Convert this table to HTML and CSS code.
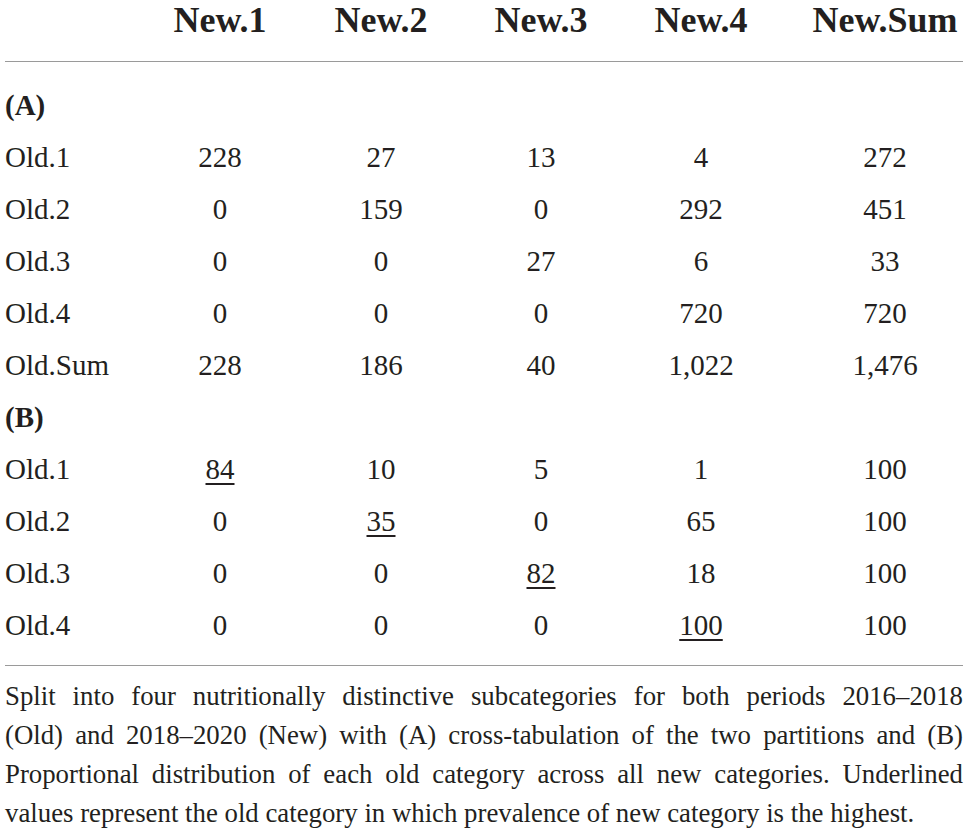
FILE: index.html
```html
<!DOCTYPE html>
<html lang="en">
<head>
<meta charset="utf-8">
<title>Table</title>
<link rel="stylesheet" href="styles.css">
</head>
<body>
<div class="wrap">
  <table class="xtab">
    <colgroup>
      <col class="c-label">
      <col class="c1">
      <col class="c2">
      <col class="c3">
      <col class="c4">
      <col class="c5">
    </colgroup>
    <thead>
      <tr>
        <th></th>
        <th>New.1</th>
        <th>New.2</th>
        <th>New.3</th>
        <th>New.4</th>
        <th class="sum">New.Sum</th>
      </tr>
    </thead>
    <tbody>
      <tr class="first"><td class="sec">(A)</td><td></td><td></td><td></td><td></td><td></td></tr>
      <tr><td>Old.1</td><td>228</td><td>27</td><td>13</td><td>4</td><td class="sum">272</td></tr>
      <tr><td>Old.2</td><td>0</td><td>159</td><td>0</td><td>292</td><td class="sum">451</td></tr>
      <tr><td>Old.3</td><td>0</td><td>0</td><td>27</td><td>6</td><td class="sum">33</td></tr>
      <tr><td>Old.4</td><td>0</td><td>0</td><td>0</td><td>720</td><td class="sum">720</td></tr>
      <tr><td>Old.Sum</td><td>228</td><td>186</td><td>40</td><td>1,022</td><td class="sum">1,476</td></tr>
      <tr><td class="sec">(B)</td><td></td><td></td><td></td><td></td><td></td></tr>
      <tr><td>Old.1</td><td><u>84</u></td><td>10</td><td>5</td><td>1</td><td class="sum">100</td></tr>
      <tr><td>Old.2</td><td>0</td><td><u>35</u></td><td>0</td><td>65</td><td class="sum">100</td></tr>
      <tr><td>Old.3</td><td>0</td><td>0</td><td><u>82</u></td><td>18</td><td class="sum">100</td></tr>
      <tr class="last"><td>Old.4</td><td>0</td><td>0</td><td>0</td><td><u>100</u></td><td class="sum">100</td></tr>
    </tbody>
  </table>
  <p class="caption">
    <span class="line">Split into four nutritionally distinctive subcategories for both periods 2016–2018</span>
    <span class="line">(Old) and 2018–2020 (New) with (A) cross-tabulation of the two partitions and (B)</span>
    <span class="line">Proportional distribution of each old category across all new categories. Underlined</span>
    <span class="line end">values represent the old category in which prevalence of new category is the highest.</span>
  </p>
</div>
</body>
</html>
```
FILE: styles.css
```css
html, body {
  margin: 0;
  padding: 0;
  background: #ffffff;
}

body {
  font-family: "Liberation Serif", "Times New Roman", serif;
  color: #231f20;
  overflow: hidden;
}

.wrap {
  width: 958px;
  padding: 0 5px;
}

.xtab {
  width: 958px;
  table-layout: fixed;
  border-collapse: collapse;
  border-bottom: 1px solid #9a9a9a;
}

.c-label { width: 135px; }
.c1 { width: 160px; }
.c2 { width: 162px; }
.c3 { width: 158px; }
.c4 { width: 162px; }
.c5 { width: 181px; }

.xtab th {
  font-size: 36px;
  font-weight: bold;
  line-height: 40px;
  height: 40px;
  padding: 0 0 21px 0;
  text-align: center;
  white-space: nowrap;
  border-bottom: 1px solid #9a9a9a;
  vertical-align: top;
}

.xtab td {
  font-size: 29px;
  line-height: 52px;
  height: 52px;
  padding: 0;
  text-align: center;
  vertical-align: middle;
  white-space: nowrap;
}

.xtab td:first-child {
  text-align: left;
}

.xtab .sum {
  padding-left: 25px;
}

.xtab td.sec {
  font-weight: bold;
}

.xtab tr.first td {
  padding-top: 17px;
}

.xtab tr.last td {
  padding-bottom: 14px;
}

.xtab u {
  text-decoration-thickness: 1.5px;
  text-underline-offset: 4px;
}

.caption {
  margin: 11px 0 0 0;
  font-size: 26.8px;
  line-height: 39px;
}

.caption .line {
  display: block;
  text-align: justify;
  text-align-last: justify;
  white-space: nowrap;
}

.caption .line.end {
  text-align-last: left;
}
```
